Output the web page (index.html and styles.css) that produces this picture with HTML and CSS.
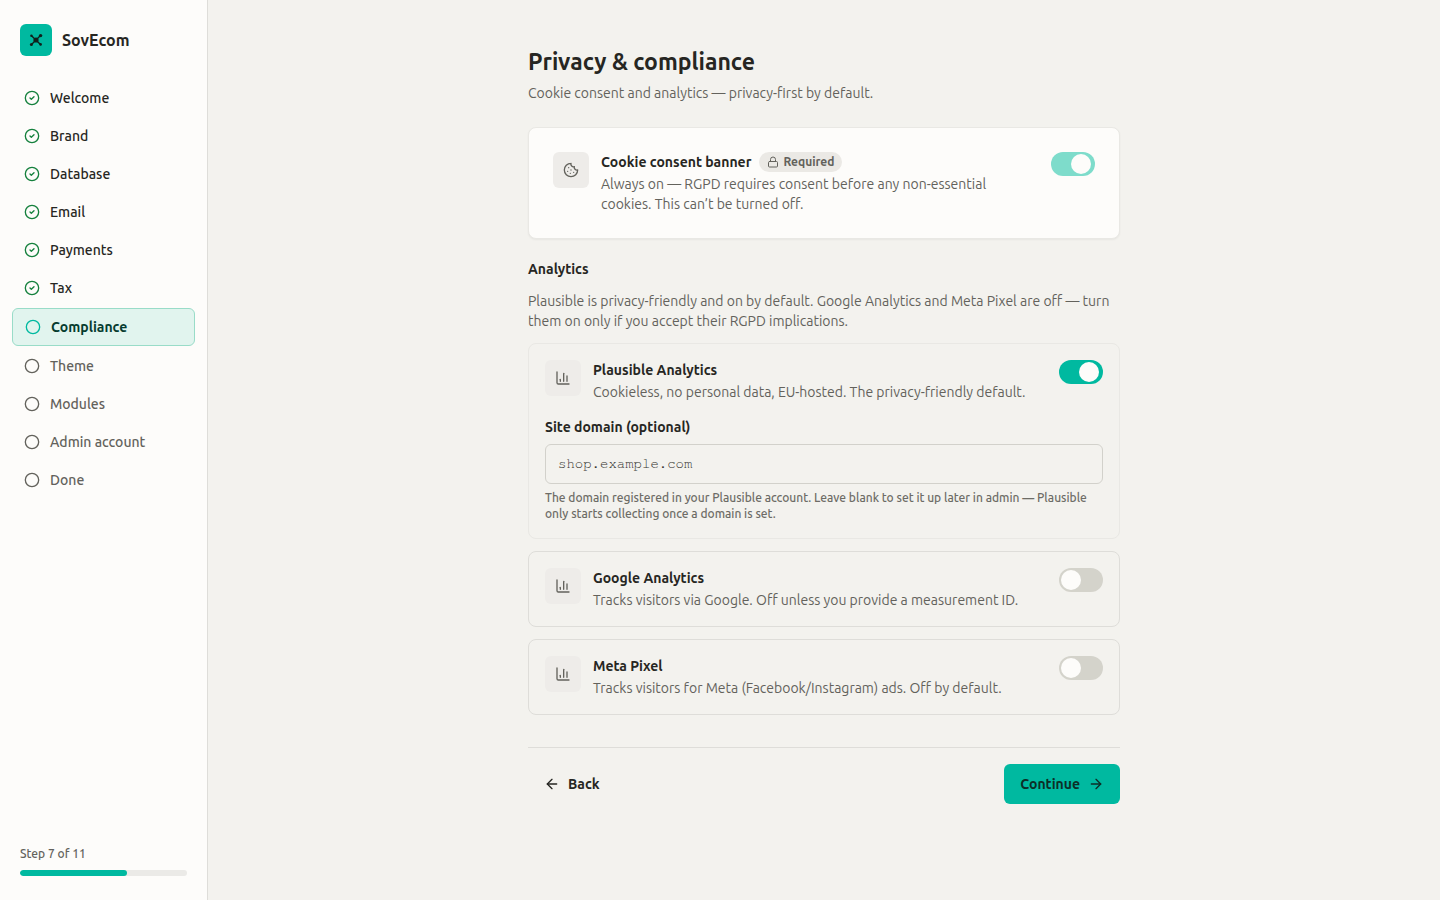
FILE: index.html
```html
<!DOCTYPE html>
<html lang="en">
<head>
<meta charset="utf-8">
<meta name="viewport" content="width=device-width, initial-scale=1">
<title>SovEcom – Privacy &amp; compliance</title>
<link rel="stylesheet" href="styles.css">
</head>
<body>
<svg class="sprite" aria-hidden="true">
  <symbol id="check" viewBox="0 0 24 24"><circle cx="12" cy="12" r="10"/><path d="m9 12 2 2 4-4"/></symbol>
  <symbol id="circle" viewBox="0 0 24 24"><circle cx="12" cy="12" r="10"/></symbol>
  <symbol id="chart" viewBox="0 0 24 24"><path d="M3 3v16a2 2 0 0 0 2 2h16"/><path d="M18 17V9"/><path d="M13 17V5"/><path d="M8 17v-3"/></symbol>
</svg>
<div class="shell">
  <aside class="sidebar">
    <div class="brand">
      <span class="brand-mark">
        <svg viewBox="0 0 16 16" width="16" height="16" aria-hidden="true">
          <path d="M3.5 3.8 12.5 12.4M12.5 3.6 3.5 12.4" stroke="currentColor" stroke-width="1.4"/>
          <circle cx="8" cy="8" r="2.6"/><circle cx="12.6" cy="3.6" r="1.7"/><circle cx="3.4" cy="3.8" r="1.2"/><circle cx="3.4" cy="12.4" r="1.5"/><circle cx="12.6" cy="12.4" r="1.3"/>
        </svg>
      </span>
      <span class="brand-name">SovEcom</span>
    </div>
    <nav class="steps" aria-label="Setup steps">
      <a class="step done" href="#"><svg class="icon"><use href="#check"/></svg>Welcome</a>
      <a class="step done" href="#"><svg class="icon"><use href="#check"/></svg>Brand</a>
      <a class="step done" href="#"><svg class="icon"><use href="#check"/></svg>Database</a>
      <a class="step done" href="#"><svg class="icon"><use href="#check"/></svg>Email</a>
      <a class="step done" href="#"><svg class="icon"><use href="#check"/></svg>Payments</a>
      <a class="step done" href="#"><svg class="icon"><use href="#check"/></svg>Tax</a>
      <a class="step current" href="#" aria-current="step"><svg class="icon"><use href="#circle"/></svg>Compliance</a>
      <a class="step" href="#"><svg class="icon"><use href="#circle"/></svg>Theme</a>
      <a class="step" href="#"><svg class="icon"><use href="#circle"/></svg>Modules</a>
      <a class="step" href="#"><svg class="icon"><use href="#circle"/></svg>Admin account</a>
      <a class="step" href="#"><svg class="icon"><use href="#circle"/></svg>Done</a>
    </nav>
    <div class="progress">
      <span class="progress-label">Step 7 of 11</span>
      <div class="track"><div class="fill" style="width:64%"></div></div>
    </div>
  </aside>
  <main class="main">
    <div class="content">
      <header class="header">
        <h1>Privacy &amp; compliance</h1>
        <p>Cookie consent and analytics — privacy-first by default.</p>
      </header>
      <section class="card consent">
        <div class="row">
          <span class="tile"><svg class="icon" viewBox="0 0 24 24"><path d="M12 2a10 10 0 1 0 10 10 4 4 0 0 1-5-5 4 4 0 0 1-5-5"/><path d="M8.5 8.5v.01M16 15.5v.01M12 12v.01M11 17v.01M7 14v.01"/></svg></span>
          <div class="text">
            <div class="title-row">
              <label class="title" for="consent">Cookie consent banner</label>
              <span class="badge"><svg viewBox="0 0 24 24"><rect x="3" y="11" width="18" height="11" rx="2"/><path d="M7 11V7a5 5 0 0 1 10 0v4"/></svg>Required</span>
            </div>
            <p class="desc">Always on — RGPD requires consent before any non-essential cookies. This can’t be turned off.</p>
          </div>
          <input class="switch" id="consent" type="checkbox" role="switch" checked disabled>
        </div>
      </section>
      <section class="analytics">
        <h2>Analytics</h2>
        <p class="desc">Plausible is privacy-friendly and on by default. Google Analytics and Meta Pixel are off — turn them on only if you accept their RGPD implications.</p>
        <div class="card soft">
          <div class="row">
            <span class="tile"><svg class="icon"><use href="#chart"/></svg></span>
            <div class="text">
              <label class="title" for="plausible">Plausible Analytics</label>
              <p class="desc">Cookieless, no personal data, EU-hosted. The privacy-friendly default.</p>
            </div>
            <input class="switch" id="plausible" type="checkbox" role="switch" checked>
          </div>
          <div class="field">
            <label class="title" for="domain">Site domain (optional)</label>
            <input class="input" id="domain" type="text" placeholder="shop.example.com">
            <p class="hint">The domain registered in your Plausible account. Leave blank to set it up later in admin — Plausible only starts collecting once a domain is set.</p>
          </div>
        </div>
        <div class="card">
          <div class="row">
            <span class="tile"><svg class="icon"><use href="#chart"/></svg></span>
            <div class="text">
              <label class="title" for="google">Google Analytics</label>
              <p class="desc">Tracks visitors via Google. Off unless you provide a measurement ID.</p>
            </div>
            <input class="switch" id="google" type="checkbox" role="switch">
          </div>
        </div>
        <div class="card">
          <div class="row">
            <span class="tile"><svg class="icon"><use href="#chart"/></svg></span>
            <div class="text">
              <label class="title" for="meta">Meta Pixel</label>
              <p class="desc">Tracks visitors for Meta (Facebook/Instagram) ads. Off by default.</p>
            </div>
            <input class="switch" id="meta" type="checkbox" role="switch">
          </div>
        </div>
      </section>
      <footer class="actions">
        <button class="button" type="button"><svg viewBox="0 0 24 24"><path d="m12 19-7-7 7-7"/><path d="M19 12H5"/></svg>Back</button>
        <button class="button primary" type="button">Continue<svg viewBox="0 0 24 24"><path d="M5 12h14"/><path d="m12 5 7 7-7 7"/></svg></button>
      </footer>
    </div>
  </main>
</div>
</body>
</html>
```

FILE: styles.css
```css
:root {
  --teal: #00b9a0;
  --ink: #262622;
  --muted: #63625c;
  --page: #f3f2ee;
  --surface: #fdfcfa;
  --line: #deddd9;
}

* { box-sizing: border-box; }

body {
  margin: 0;
  background: var(--page);
  color: var(--ink);
  font: 14px/20px Ubuntu, "Noto Sans", sans-serif;
}

h1, h2, p { margin: 0; }

svg {
  fill: none;
  stroke: currentColor;
  stroke-width: 2;
  stroke-linecap: round;
  stroke-linejoin: round;
  flex: none;
}

.sprite { display: none; }
.icon { width: 16px; height: 16px; }

.shell { display: flex; min-height: 100vh; }

.sidebar {
  width: 208px;
  flex: none;
  display: flex;
  flex-direction: column;
  gap: 24px;
  padding: 24px 12px;
  background: var(--surface);
  border-right: 1px solid var(--line);
}

.brand { display: flex; align-items: center; gap: 10px; padding: 0 8px; }

.brand-mark {
  width: 32px;
  height: 32px;
  display: grid;
  place-items: center;
  border-radius: 6px;
  background: var(--teal);
  color: #10201c;
}

.brand-mark svg { fill: currentColor; stroke: none; }
.brand-name { font-size: 16px; font-weight: 700; }

.steps { display: flex; flex-direction: column; gap: 2px; }

.step {
  display: flex;
  align-items: center;
  gap: 10px;
  padding: 8px 12px;
  border-radius: 6px;
  color: var(--muted);
  font-weight: 500;
  text-decoration: none;
}

.step.done { color: var(--ink); }
.step.done .icon { color: #15803d; }

.step.current {
  border: 1px solid #99dcc8;
  background: #e1f4ee;
  color: #063c30;
  font-weight: 600;
}

.step.current .icon { color: var(--teal); }

.progress { margin-top: auto; padding: 0 8px; }
.progress-label { display: block; margin-bottom: 8px; font-size: 12px; line-height: 16px; font-weight: 500; color: var(--muted); }
.track { height: 6px; border-radius: 3px; background: #ebeae7; overflow: hidden; }
.fill { height: 100%; border-radius: 3px; background: var(--teal); }

.main { flex: 1; min-width: 0; padding: 48px 24px; }
.content { max-width: 592px; margin: 0 auto; }

.header { margin-bottom: 24px; color: var(--muted); }
.header h1 { margin-bottom: 8px; font-size: 23px; line-height: 27px; font-weight: 700; color: var(--ink); }

.card { padding: 16px; border: 1px solid var(--line); border-radius: 8px; }
.card.soft { border-color: #e9e8e4; }

.consent {
  padding: 24px;
  margin-bottom: 20px;
  border-color: #e9e8e4;
  background: var(--surface);
  box-shadow: 0 1px 2px #0000000d;
}

.row { display: flex; align-items: flex-start; gap: 12px; }

.tile {
  width: 36px;
  height: 36px;
  flex: none;
  display: grid;
  place-items: center;
  border-radius: 6px;
  background: #eeece9;
  color: var(--muted);
}

.text { flex: 1; min-width: 0; }
.title, h2 { display: block; font-size: 14px; line-height: 20px; font-weight: 600; }
.text .desc { margin-top: 2px; }
.desc { color: var(--muted); }
.title-row { display: flex; align-items: center; gap: 8px; }

.badge {
  display: flex;
  align-items: center;
  gap: 4px;
  padding: 2px 8px;
  border-radius: 10px;
  background: #ebe9e5;
  color: var(--muted);
  font-size: 12px;
  line-height: 16px;
  font-weight: 600;
}

.badge svg { width: 12px; height: 12px; }

.switch {
  appearance: none;
  flex: none;
  width: 44px;
  height: 24px;
  margin: 0;
  padding: 2px;
  border-radius: 12px;
  background: #d4d3cb;
}

.switch::before {
  content: "";
  display: block;
  width: 20px;
  height: 20px;
  border-radius: 50%;
  background: var(--surface);
}

.switch:checked { padding-right: 4px; background: var(--teal); }
.switch:checked::before { margin-left: auto; }
.switch:disabled { background: #7edccb; }

.analytics { display: flex; flex-direction: column; gap: 12px; }

.field { margin-top: 15px; }

.input {
  display: block;
  width: 100%;
  height: 40px;
  margin: 7px 0 6px;
  padding: 0 12px;
  border: 1px solid #d2d1cb;
  border-radius: 6px;
  background: transparent;
  color: var(--ink);
  font: 14px "Nimbus Mono PS", "Courier 10 Pitch", FreeMono, Courier, "Liberation Mono", monospace;
}

.input::placeholder { color: #33322e; opacity: 1; }
.hint { font-size: 12px; line-height: 16px; font-weight: 500; color: #6d6c66; }

.actions {
  display: flex;
  justify-content: space-between;
  margin-top: 32px;
  padding-top: 16px;
  border-top: 1px solid var(--line);
}

.button {
  display: flex;
  align-items: center;
  gap: 8px;
  height: 40px;
  padding: 0 16px;
  border: 0;
  border-radius: 6px;
  background: transparent;
  color: var(--ink);
  font: inherit;
  font-weight: 600;
}

.button svg { width: 16px; height: 16px; }
.button.primary { background: var(--teal); color: #0c2e27; }
```
